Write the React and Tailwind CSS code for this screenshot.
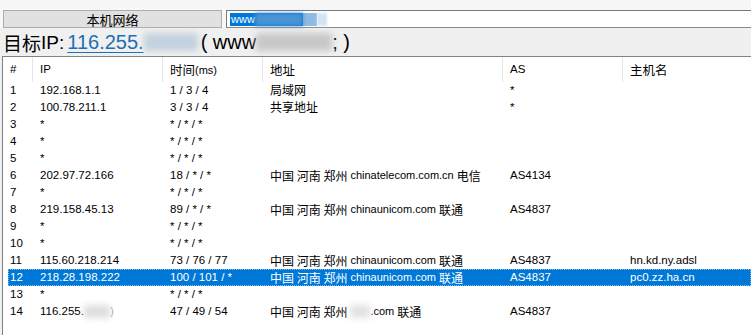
import React from 'react';

const cols = [
  { w: 'w-[30px]', label: '#' },
  { w: 'w-[130px]', label: 'IP' },
  { w: 'w-[100px]', label: 'time' },
  { w: 'w-[240px]', label: '地址' },
  { w: 'w-[120px]', label: 'AS' },
  { w: 'flex-1', label: '主机名' },
];

const rows = [
  ['1', '192.168.1.1', '1 / 3 / 4', ['局域网'], '*', ''],
  ['2', '100.78.211.1', '3 / 3 / 4', ['共享地址'], '*', ''],
  ['3', '*', '* / * / *', null, '', ''],
  ['4', '*', '* / * / *', null, '', ''],
  ['5', '*', '* / * / *', null, '', ''],
  ['6', '202.97.72.166', '18 / * / *', ['中国 河南 郑州', 'chinatelecom.com.cn', '电信'], 'AS4134', ''],
  ['7', '*', '* / * / *', null, '', ''],
  ['8', '219.158.45.13', '89 / * / *', ['中国 河南 郑州', 'chinaunicom.com', '联通'], 'AS4837', ''],
  ['9', '*', '* / * / *', null, '', ''],
  ['10', '*', '* / * / *', null, '', ''],
  ['11', '115.60.218.214', '73 / 76 / 77', ['中国 河南 郑州', 'chinaunicom.com', '联通'], 'AS4837', 'hn.kd.ny.adsl'],
  ['12', '218.28.198.222', '100 / 101 / *', ['中国 河南 郑州', 'chinaunicom.com', '联通'], 'AS4837', 'pc0.zz.ha.cn'],
  ['13', '*', '* / * / *', null, '', ''],
  ['14', 'blurip', '47 / 49 / 54', ['中国 河南 郑州', 'blurcom', '联通'], 'AS4837', ''],
];

const cjk = "font-['Noto_Sans_CJK_SC',sans-serif]";

function Address({ parts }) {
  if (!parts) return null;
  if (parts.length === 1) return <span className={`${cjk} text-[12px] leading-[14px]`}>{parts[0]}</span>;
  return (
    <span className="flex items-center whitespace-nowrap">
      <span className={`${cjk} text-[12px] leading-[14px]`}>{parts[0]}</span>
      {parts[1] === 'blurcom' ? (
        <span className="flex items-center ml-[3px] text-[11px]">
          <span className="inline-block w-[20px] h-[13px] bg-[#e2e2e2] blur-[3px]" />
          <span>.com</span>
        </span>
      ) : (
        <span className="ml-[3px] text-[11px]">{parts[1]}</span>
      )}
      <span className={`${cjk} text-[12px] leading-[14px] ml-[3px]`}>{parts[2]}</span>
    </span>
  );
}

export default function App() {
  return (
    <div className="w-[751px] h-[335px] overflow-hidden bg-[#f0f0f0] flex flex-col font-['Liberation_Sans',sans-serif] text-black">
      {/* top bar */}
      <div className="h-[10px] bg-[#f7f7f7]" />
      <div className="h-[18px] flex bg-[#f7f7f7]">
        <button className="ml-[3px] w-[219px] h-[18px] bg-[#e1e1e1] border border-[#adadad] flex items-center justify-center">
          <span className={`${cjk} text-[13px] leading-none`}>本机网络</span>
        </button>
        <div className="ml-[4px] flex-1 h-[18px] bg-white border-t border-l border-[#7a7a7a] border-b border-b-[#8a8a8a] flex items-center pl-[3px]">
          <span className="flex items-center h-[13px] bg-[#0078d7] text-white text-[11px] leading-none pl-[1px]">
            www
            <span className="inline-block w-[48px] h-[13px] bg-[#4a93d4] blur-[2px]" />
            <span className="inline-block w-[14px] h-[13px] bg-[#8fbbe2]" />
          </span>
          <span className="inline-block w-[10px] h-[13px] bg-[#d2e4f3] blur-[1px]" />
        </div>
      </div>

      {/* target line */}
      <div className="h-[28px] flex items-center pl-[3px] text-[20px] leading-none">
        <span className={`${cjk} text-[19px]`}>目标</span>
        <span className="text-[19px]">IP:</span>
        <span className="ml-[3px] text-[#1c6fb4] underline underline-offset-[3px] decoration-1 flex items-center">
          116.255.
          <span className="inline-block w-[54px] h-[18px] bg-[#c3d2df] blur-[3px]" />
        </span>
        <span className="ml-[3px]">( www</span>
        <span className="inline-block w-[76px] h-[18px] bg-[#c8c8c8] blur-[3px]" />
        <span>; )</span>
      </div>

      {/* table */}
      <div className="flex-1 ml-[2px] bg-white border-l border-t border-[#828282] text-[11.5px] leading-none">
        <div className="h-[25px] flex">
          {cols.map((c, i) => (
            <div
              key={i}
              className={`${c.w} pl-[7px] flex items-center ${i < 5 ? 'border-r border-[#e5e5e5]' : ''}`}
            >
              {c.label === 'time' ? (
                <span className="flex items-end">
                  <span className={`${cjk} text-[12.5px] leading-[14px]`}>时间</span>
                  <span className="text-[11px] leading-[13px]">(ms)</span>
                </span>
              ) : c.label === '地址' || c.label === '主机名' ? (
                <span className={`${cjk} text-[12.5px] leading-[14px]`}>{c.label}</span>
              ) : (
                <span>{c.label}</span>
              )}
            </div>
          ))}
        </div>
        <div className="pl-[5px]">
          {rows.map((r) => {
            const sel = r[0] === '12';
            return (
              <div
                key={r[0]}
                className={`h-[17px] flex items-center ${sel ? 'bg-[#0078d7] text-white outline outline-1 outline-dotted outline-offset-[-1px] outline-[#8ab8e6]' : ''}`}
              >
                <div className="w-[25px] pl-[2px]">{r[0]}</div>
                <div className="w-[130px] pl-[7px] flex items-center">
                  {r[1] === 'blurip' ? (
                    <>
                      <span>116.255.</span>
                      <span className="inline-block w-[26px] h-[13px] bg-[#dedede] blur-[3px]" />
                      <span className="text-[#aaa]">)</span>
                    </>
                  ) : (
                    r[1]
                  )}
                </div>
                <div className="w-[100px] pl-[7px]">{r[2]}</div>
                <div className="w-[240px] pl-[7px]">
                  <Address parts={r[3]} />
                </div>
                <div className="w-[120px] pl-[7px]">{r[4]}</div>
                <div className="flex-1 pl-[7px]">{r[5]}</div>
              </div>
            );
          })}
        </div>
      </div>
    </div>
  );
}
